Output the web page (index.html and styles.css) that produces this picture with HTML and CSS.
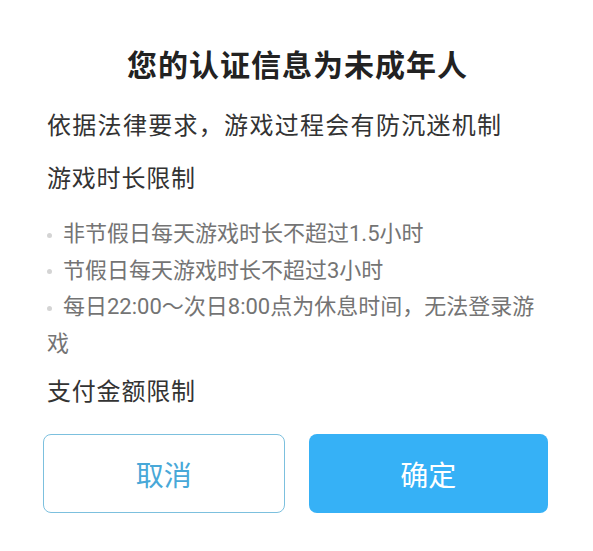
FILE: index.html
```html
<!DOCTYPE html>
<html>
<head>
    <meta charset="UTF-8">
    <meta name="viewport" content="width=device-width, initial-scale=1.0">
    <title>防沉迷提示</title>
    <link rel="stylesheet" href="styles.css">
</head>
<body>
<div id="ageDialog">
    <h2 class="dialog-title">您的认证信息为未成年人</h2>
    <p class="notice">依据法律要求，游戏过程会有防沉迷机制</p>
    <p class="section">游戏时长限制</p>
    <ul class="tips">
        <li>非节假日每天游戏时长不超过1.5小时</li>
        <li>节假日每天游戏时长不超过3小时</li>
        <li>每日22:00～次日8:00点为休息时间，无法登录游戏</li>
    </ul>
    <p class="section section-pay">支付金额限制</p>
    <div class="button-container">
        <button id="cancelButton">取消</button>
        <button id="okButton">确定</button>
    </div>
</div>
</body>
</html>
```

FILE: styles.css
```css
body {
    font-family: Roboto, "Noto Sans CJK SC", sans-serif;
    margin: 0;
    background-color: #fff;
    color: #333;
}
#ageDialog {
    padding: 0 45px 0 43px;
}
.dialog-title {
    margin: 46px 0 0 4px;
    font-size: 30px;
    line-height: 40px;
    font-weight: bold;
    letter-spacing: 1px;
    text-align: center;
    color: #222;
}
.notice {
    margin: 22px 0 0 4px;
    font-size: 24px;
    line-height: 36px;
    letter-spacing: 1.3px;
}
.section {
    margin: 17px 0 0 4px;
    font-size: 24px;
    line-height: 36px;
    letter-spacing: 0.8px;
}
.tips {
    list-style: none;
    margin: 19px 0 0 4px;
    padding: 0;
    font-size: 22px;
    line-height: 36.5px;
    color: #747474;
}
.tips li::before {
    content: "";
    display: inline-block;
    width: 5px;
    height: 5px;
    border-radius: 50%;
    background-color: #d4d4d4;
    margin-right: 11px;
    vertical-align: middle;
}
.section-pay {
    margin-top: 12px;
}
.button-container {
    display: flex;
    gap: 24px;
    margin-top: 24px;
}
.button-container button {
    flex: 1;
    height: 79px;
    border-radius: 8px;
    font-family: Roboto, "Noto Sans CJK SC", sans-serif;
    font-size: 28px;
    cursor: pointer;
}
#cancelButton {
    background-color: #fff;
    border: 1.5px solid #7cc0de;
    color: #48a8d8;
}
#okButton {
    background-color: #36b1f6;
    border: none;
    color: #fff;
}
```
